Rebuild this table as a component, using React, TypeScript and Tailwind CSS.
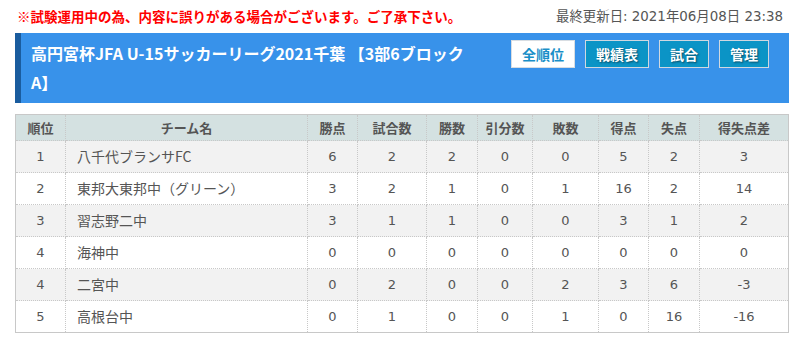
import React from "react";

const cols = [50, 242, 50, 69, 51, 55, 66, 50, 51, 89];
const heads = ["順位", "チーム名", "勝点", "試合数", "勝数", "引分数", "敗数", "得点", "失点", "得失点差"];
const rows: (string | number)[][] = [
  [1, "八千代ブランサFC", 6, 2, 2, 0, 0, 5, 2, 3],
  [2, "東邦大東邦中（グリーン）", 3, 2, 1, 0, 1, 16, 2, 14],
  [3, "習志野二中", 3, 1, 1, 0, 0, 3, 1, 2],
  [4, "海神中", 0, 0, 0, 0, 0, 0, 0, 0],
  [4, "二宮中", 0, 2, 0, 0, 2, 3, 6, -3],
  [5, "高根台中", 0, 1, 0, 0, 1, 0, 16, -16],
];

const font = { fontFamily: '"Noto Sans CJK JP", "Noto Sans", sans-serif' };
const verd = { fontFamily: '"DejaVu Sans", "Noto Sans CJK JP", sans-serif' };

export default function App() {
  return (
    <div className="w-[804px] h-[348px] bg-white px-[15px]" style={font}>
      <div className="flex items-center justify-between h-[33px] pl-[2px] pr-[6px]">
        <span className="text-[13.5px] font-bold text-[#ff0000] leading-none">
          ※試験運用中の為、内容に誤りがある場合がございます。ご了承下さい。
        </span>
        <span className="text-[13.4px] text-[#555] leading-none" style={verd}>
          最終更新日: 2021年06月08日 23:38
        </span>
      </div>
      <div className="flex h-[70px] bg-[#3892ea] border-l-[6px] border-[#1a5c9e] pl-[10px] pr-[20px] gap-[36px]">
        <h1 className="flex-1 text-white font-bold text-[16px] leading-[29px] pt-[6px]">
          高円宮杯JFA U-15サッカーリーグ2021千葉 【3部6ブロックA】
        </h1>
        <div className="flex gap-[10px] pt-[7px] items-start">
          <span className="w-[64px] h-[28px] flex items-center justify-center bg-white border border-[#d8dde2] text-[#1a8fc8] font-bold text-[14px]">
            全順位
          </span>
          {[
            ["戦績表", "w-[64px]"],
            ["試合", "w-[50px]"],
            ["管理", "w-[50px]"],
          ].map(([t, w]) => (
            <span
              key={t}
              className={`${w} h-[28px] flex items-center justify-center bg-[#0b94c6] border border-[#d0d8e0] text-white font-bold text-[14px] [text-shadow:1px_1px_2px_rgba(0,0,0,0.5)]`}
            >
              {t}
            </span>
          ))}
        </div>
      </div>
      <table className="mt-[11px] w-[773px] table-fixed border-collapse border border-[#c8c8c8] text-[#555]">
        <colgroup>
          {cols.map((w, i) => (
            <col key={i} style={{ width: w }} />
          ))}
        </colgroup>
        <thead>
          <tr className="bg-[#d4e1e1] h-[26px]">
            {heads.map((h) => (
              <th key={h} className="border border-dotted border-[#c8c8c8] text-[13px] font-bold text-center p-0 text-[#555]">
                {h}
              </th>
            ))}
          </tr>
        </thead>
        <tbody>
          {rows.map((r, i) => (
            <tr key={i} className={`h-[32px] ${i % 2 === 0 ? "bg-[#f2f2f2]" : "bg-white"}`}>
              {r.map((c, j) =>
                j === 1 ? (
                  <td key={j} className="border border-dotted border-[#c8c8c8] text-[14px] p-0 text-left pl-[11px]">
                    {c}
                  </td>
                ) : (
                  <td key={j} className="border border-dotted border-[#c8c8c8] text-[13px] p-0 text-center" style={verd}>
                    {c}
                  </td>
                )
              )}
            </tr>
          ))}
        </tbody>
      </table>
    </div>
  );
}
